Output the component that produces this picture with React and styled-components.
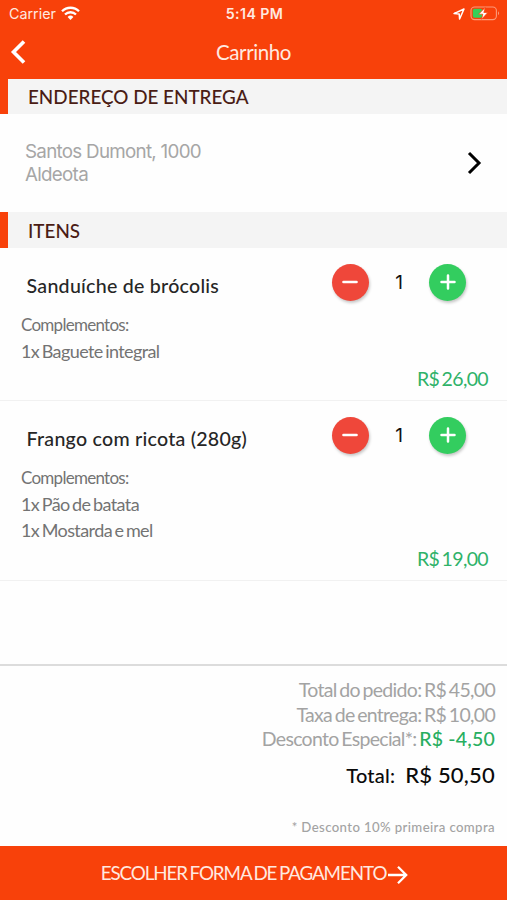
import React from "react";
import styled, { createGlobalStyle } from "styled-components";

const GlobalStyle = createGlobalStyle`
  * {
    box-sizing: border-box;
  }
  body {
    margin: 0;
    background: #fefefe;
    font-family: Lato, "Liberation Sans", sans-serif;
  }
`;

/* styled-components */
const Screen = styled.div`
  width: 507px;
  height: 900px;
  display: flex;
  flex-direction: column;
  overflow: hidden;
  white-space: nowrap;
`;

const Header = styled.header`
  height: 79px;
  background-color: #f8410a;
  color: #ffe9e0;
`;

const StatusBar = styled.div`
  height: 27px;
  padding: 0 6px 0 9px;
  display: grid;
  grid-template-columns: 1fr auto 1fr;
  align-items: center;
  font-family: Inter, "Liberation Sans", sans-serif;
  font-size: 14.3px;
`;

const StatusGroup = styled.div`
  display: flex;
  align-items: center;
  justify-content: ${(props) => (props.$end ? "flex-end" : "flex-start")};
  gap: 5px;
`;

const Clock = styled.span`
  padding-right: 1px;
  font-size: 14.2px;
  font-weight: 600;
  letter-spacing: 0.4px;
`;

const NavBar = styled.div`
  height: 50px;
  padding: 0 10px;
  display: grid;
  grid-template-columns: 1fr auto 1fr;
  align-items: center;
`;

const Title = styled.h1`
  margin: 0;
  font-size: 20.5px;
  font-weight: 400;
  letter-spacing: -0.4px;
`;

const SectionTitle = styled.h2`
  margin: 0;
  height: ${(props) => props.$height}px;
  padding-left: 20px;
  border-left: 8px solid #f8410a;
  background-color: #f4f4f4;
  color: #4a1c14;
  font-size: 18.85px;
  font-weight: 500;
  line-height: ${(props) => props.$line}px;
`;

const Address = styled.div`
  height: 98px;
  padding: 0 25px;
  display: flex;
  align-items: center;
  justify-content: space-between;
`;

const AddressText = styled.p`
  margin: 0;
  padding-bottom: 1px;
  color: #a6a6a6;
  font-family: Inter, "Liberation Sans", sans-serif;
  font-size: 18.8px;
  font-weight: 400;
  letter-spacing: -0.72px;
  line-height: 23px;
`;

const Item = styled.div`
  padding: 16px 19px 9px 21px;
  border-bottom: 1px solid #f1f1f1;
`;

const ItemTop = styled.div`
  height: 37px;
  padding: 0 21.5px 0 5.6px;
  display: flex;
  align-items: center;
  justify-content: space-between;
`;

const ItemName = styled.h3`
  margin: 0;
  padding-top: 6px;
  color: #262626;
  font-size: 19.6px;
  font-weight: 500;
  letter-spacing: 0.25px;
`;

const Stepper = styled.div`
  width: 135px;
  display: flex;
  align-items: center;
  justify-content: space-between;
`;

const RoundButton = styled.button`
  width: 37px;
  height: 37px;
  padding: 0 0 2px;
  display: flex;
  align-items: center;
  justify-content: center;
  border: none;
  border-radius: 50%;
  background-color: ${(props) => props.$color};
  box-shadow: 1px 2px 3px rgba(0, 0, 0, 0.22);
`;

const Quantity = styled.span`
  color: #111;
  font-family: Inter, "Liberation Sans", sans-serif;
  font-size: 19px;
`;

const Extras = styled.ul`
  margin: 11px 0 2px;
  padding: 0;
  list-style-type: none;
  color: #737373;
  font-size: 18px;
  letter-spacing: -0.6px;
  word-spacing: -1.5px;
  line-height: 26.6px;
`;

const ExtrasLabel = styled.li`
  height: 25.5px;
  font-size: 17px;
  letter-spacing: -0.73px;
`;

const Price = styled.div`
  margin-top: 3px;
  color: #2fb269;
  font-size: 19.5px;
  letter-spacing: -0.65px;
  word-spacing: -2px;
  line-height: 24px;
  text-align: right;
`;

const Summary = styled.div`
  height: 182px;
  margin-top: auto;
  padding: 12px 12px 0 0;
  border-top: 2px solid #dcdcdc;
  text-align: right;
`;

const SummaryLine = styled.div`
  height: 24.5px;
  color: #a3a3a3;
  font-size: 19.5px;
  letter-spacing: -0.7px;
  word-spacing: -1.6px;
  line-height: 24.5px;
`;

const Discount = styled.span`
  color: #27ae60;
  font-weight: 500;
  letter-spacing: 0.2px;
  line-height: 0;
  word-spacing: 0;
`;

const Total = styled.div`
  margin-top: 9px;
  display: flex;
  align-items: baseline;
  justify-content: flex-end;
  gap: 10px;
  color: #0a0a0a;
  font-size: 20px;
  font-weight: 500;
  letter-spacing: 0.2px;
  line-height: 28px;
`;

const TotalValue = styled.span`
  font-size: 22px;
`;

const Note = styled.div`
  margin-top: 28px;
  color: #a3a3a3;
  font-size: 13.2px;
  font-weight: 500;
  letter-spacing: 0.38px;
  line-height: 20px;
`;

const PayButton = styled.button`
  height: 54px;
  padding: 0 0 0 2px;
  display: flex;
  align-items: center;
  justify-content: center;
  gap: 1px;
  border: none;
  background-color: #f8410a;
  color: #ffe9e0;
  font-family: inherit;
  font-size: 18.8px;
  letter-spacing: -1.08px;
  word-spacing: -1.2px;
`;

const PayLabel = styled.span`
  padding-bottom: 2px;
`;

const ArrowIcon = styled.svg`
  margin-top: 3px;
`;

const items = [
  {
    name: "Sanduíche de brócolis",
    extras: ["1x Baguete integral"],
    price: "R$ 26,00",
  },
  {
    name: "Frango com ricota (280g)",
    extras: ["1x Pão de batata", "1x Mostarda e mel"],
    price: "R$ 19,00",
  },
];

function WifiIcon() {
  return (
    <svg width="19" height="15" viewBox="0 0 19 15" fill="none" stroke="#fff" strokeWidth="2.3">
      <path d="M1 5.3a12 12 0 0 1 17 0" />
      <path d="M4 8.5a7.8 7.8 0 0 1 11 0" />
      <path d="M6.6 10.9a4.1 4.1 0 0 1 5.8 0L9.5 13.9z" fill="#fff" stroke="none" />
    </svg>
  );
}

function LocationIcon() {
  return (
    <svg width="12" height="12" viewBox="0 0 12 12" fill="none" stroke="#fff" strokeWidth="1.5" strokeLinejoin="round">
      <path d="M1 5.6L11 1L6.6 11L6.2 6z" />
    </svg>
  );
}

function BatteryIcon() {
  return (
    <svg width="31" height="15" viewBox="0 0 31 15" fill="none">
      <rect x="1" y="1" width="25.4" height="12.6" rx="3.6" stroke="#fb9a7a" strokeWidth="1.1" />
      <path d="M28 5.3q2.2 2 0 4z" fill="#fb9a7a" />
      <rect x="2.8" y="2.8" width="9.4" height="9" rx="1.8" fill="#34d058" />
      <path d="M15.3 1.4L8.6 8.2h4.2L11.6 13.3l6.2-6.8h-4z" fill="#fff" stroke="#f8410a" strokeWidth="0.7" />
    </svg>
  );
}

function CartItem({ item }) {
  return (
    <Item>
      <ItemTop>
        <ItemName>{item.name}</ItemName>
        <Stepper>
          <RoundButton $color="#ef473a">
            <svg width="16" height="16" viewBox="0 0 16 16" stroke="#fff" strokeWidth="2.6" strokeLinecap="round">
              <path d="M1.5 8h13" />
            </svg>
          </RoundButton>
          <Quantity>1</Quantity>
          <RoundButton $color="#33cd5f">
            <svg width="16" height="16" viewBox="0 0 16 16" stroke="#fff" strokeWidth="2.5" strokeLinecap="round">
              <path d="M1.5 8h13M8 1.5v13" />
            </svg>
          </RoundButton>
        </Stepper>
      </ItemTop>
      <Extras>
        <ExtrasLabel>Complementos:</ExtrasLabel>
        {item.extras.map((extra) => (
          <li key={extra}>{extra}</li>
        ))}
      </Extras>
      <Price>{item.price}</Price>
    </Item>
  );
}

export default function App() {
  return (
    <Screen>
      <GlobalStyle />
      <Header>
        <StatusBar>
          <StatusGroup>
            <span>Carrier</span>
            <WifiIcon />
          </StatusGroup>
          <Clock>5:14 PM</Clock>
          <StatusGroup $end>
            <LocationIcon />
            <BatteryIcon />
          </StatusGroup>
        </StatusBar>
        <NavBar>
          <svg width="16" height="26" viewBox="0 0 16 26" fill="none" stroke="#fff" strokeWidth="3.6">
            <path d="M14 2.5L3.5 13L14 23.5" />
          </svg>
          <Title>Carrinho</Title>
        </NavBar>
      </Header>
      <SectionTitle $height={35} $line={35}>ENDEREÇO DE ENTREGA</SectionTitle>
      <Address>
        <AddressText>
          Santos Dumont, 1000
          <br />
          Aldeota
        </AddressText>
        <svg width="16" height="24" viewBox="0 0 16 24" fill="none" stroke="#000" strokeWidth="3">
          <path d="M3 2L13 12L3 22" />
        </svg>
      </Address>
      <SectionTitle $height={36} $line={38}>ITENS</SectionTitle>
      {items.map((item) => (
        <CartItem key={item.name} item={item} />
      ))}
      <Summary>
        <SummaryLine>Total do pedido: R$ 45,00</SummaryLine>
        <SummaryLine>Taxa de entrega: R$ 10,00</SummaryLine>
        <SummaryLine>
          Desconto Especial*: <Discount>R$ -4,50</Discount>
        </SummaryLine>
        <Total>
          Total: <TotalValue>R$ 50,50</TotalValue>
        </Total>
        <Note>* Desconto 10% primeira compra</Note>
      </Summary>
      <PayButton>
        <PayLabel>ESCOLHER FORMA DE PAGAMENTO</PayLabel>
        <ArrowIcon width="21" height="20" viewBox="0 0 21 20" fill="none" stroke="#fff" strokeWidth="2.3">
          <path d="M1 10h18M11 1.8l8.2 8.2l-8.2 8.2" />
        </ArrowIcon>
      </PayButton>
    </Screen>
  );
}
